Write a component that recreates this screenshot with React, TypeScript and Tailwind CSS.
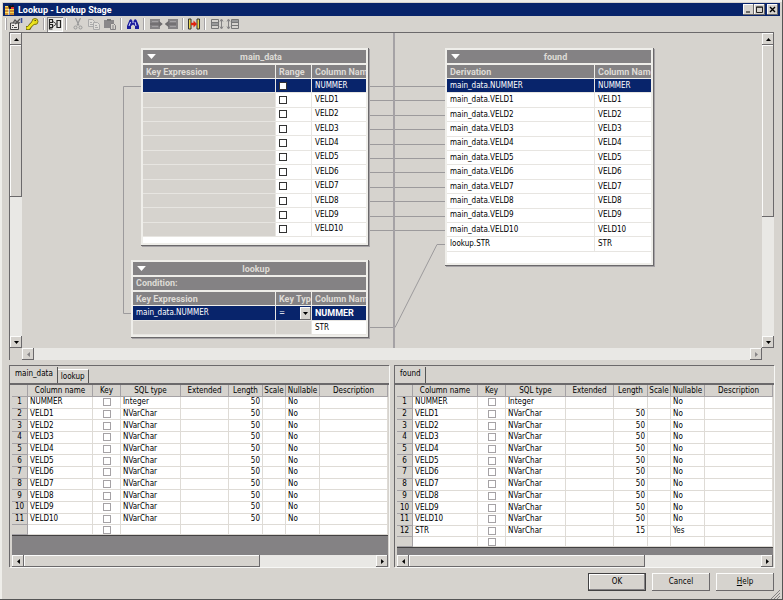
import type { ReactNode } from "react";
import clsx from "clsx";

type Column = { name: string; type: string; length?: number; nullable: string };

const velds = Array.from({ length: 10 }, (_, i) => `VELD${i + 1}`);

const mainColumns: Column[] = [
  { name: "NUMMER", type: "Integer", length: 50, nullable: "No" },
  ...velds.map((name) => ({ name, type: "NVarChar", length: 50, nullable: "No" })),
];

const foundColumns: Column[] = [
  { name: "NUMMER", type: "Integer", nullable: "No" },
  ...velds.map((name) => ({ name, type: "NVarChar", length: 50, nullable: "No" })),
  { name: "STR", type: "NVarChar", length: 15, nullable: "Yes" },
];

const raised =
  "bg-[#d6d3ce] shadow-[inset_-1px_-1px_#6b696b,inset_1px_1px_#fbfbfa]";

const arrows = {
  up: "M0 4h7L3.5 0z",
  down: "M0 0h7L3.5 4z",
  left: "M4 0v7L0 3.5z",
  right: "M0 0v7L4 3.5z",
};

function Arrow({ dir, className }: { dir: keyof typeof arrows; className?: string }) {
  const flat = dir === "up" || dir === "down";
  return (
    <svg
      aria-hidden="true"
      viewBox={flat ? "0 0 7 4" : "0 0 4 7"}
      className={className ?? (flat ? "h-[3px] w-[5px]" : "h-[5px] w-[3px]")}
      fill="currentColor"
    >
      <path d={arrows[dir]} />
    </svg>
  );
}

function ScrollButton({ dir, disabled }: { dir: keyof typeof arrows; disabled?: boolean }) {
  return (
    <button
      type="button"
      aria-label={`Scroll ${dir}`}
      disabled={disabled}
      className={clsx(
        "flex size-3 shrink-0 items-center justify-center",
        raised,
        disabled ? "text-[#848284]" : "text-black",
      )}
    >
      <Arrow dir={dir} />
    </button>
  );
}

function VerticalScroll({ thumb }: { thumb: string }) {
  return (
    <div className="flex w-3 shrink-0 flex-col bg-[#d6d3ce] pb-3">
      <div className="flex flex-1 flex-col bg-[#e9e8e5]">
        <ScrollButton dir="up" />
        <div className="flex-1">
          <div className={clsx(raised, thumb)} />
        </div>
        <ScrollButton dir="down" />
      </div>
    </div>
  );
}

function HorizontalScroll({ thumb, disabled }: { thumb?: string; disabled?: boolean }) {
  return (
    <div className="flex h-3 shrink-0 bg-[#e9e8e5]">
      <ScrollButton dir="left" disabled={disabled} />
      <div className="flex-1">{thumb && <div className={clsx("h-full", raised, thumb)} />}</div>
      <ScrollButton dir="right" disabled={disabled} />
    </div>
  );
}

function AppIcon() {
  return (
    <svg viewBox="0 0 12 12" className="size-3" aria-hidden="true">
      <path d="M1 2h4v9H1z" fill="#ffe35a" />
      <path d="M6 5h4v6H6z" fill="#f7d84a" />
      <path d="M1 4h4M1 7h4M1 10h4M6 7h4M6 10h4" stroke="#a23a10" />
      <path d="M5 1l3 1 1-2 1 3-3 2-3-2z" fill="#111" />
      <path d="M7 3h3v2H7z" fill="#d33" />
      <path d="M5 5v6" stroke="#fff" />
    </svg>
  );
}

function TitleBar() {
  const button = clsx("flex h-[11px] w-[11px] items-center justify-center text-black", raised);
  return (
    <header className="flex h-[13px] items-center gap-[2px] bg-[#08246b] pr-[2px] pl-px text-white">
      <AppIcon />
      <h1 className="flex-1 text-[9px] leading-3 font-bold">Lookup - Lookup Stage</h1>
      <div className="flex">
        <button type="button" aria-label="Minimize" className={button}>
          <svg viewBox="0 0 7 7" className="size-[7px]">
            <path d="M1 6h4" stroke="#000" />
          </svg>
        </button>
        <button type="button" aria-label="Maximize" className={button}>
          <svg viewBox="0 0 7 7" className="size-[7px]">
            <path d="M.5 1h6v5.5h-6zM0 1.2h7" fill="none" stroke="#222" />
          </svg>
        </button>
      </div>
      <button type="button" aria-label="Close" className={button}>
        <svg viewBox="0 0 7 7" className="size-[7px]">
          <path d="M1 1l5 5M6 1L1 6" stroke="#000" strokeWidth="1.4" />
        </svg>
      </button>
    </header>
  );
}

function Tool({ label, active, children }: { label: string; active?: boolean; children: ReactNode }) {
  return (
    <button
      type="button"
      aria-label={label}
      aria-pressed={active}
      className={clsx(
        "flex h-[15px] w-4 shrink-0 items-center justify-center",
        active && "bg-[#e9e8e5] shadow-[inset_1px_1px_#848284,inset_-1px_-1px_#fff]",
      )}
    >
      <svg viewBox="0 0 14 12" className="h-3 w-[14px]" fill="none">
        {children}
      </svg>
    </button>
  );
}

function Divider() {
  return <div className="mx-[2px] h-3 w-[2px] shrink-0 border-r border-l border-r-white border-l-[#a5a2a5]" />;
}

function Toolbar() {
  return (
    <div role="toolbar" className="flex h-4 items-center pl-[2px]">
      <div className="mr-px h-3 w-[2px] border-r border-l border-r-[#a5a2a5] border-l-white" />
      <Tool label="Stage properties">
        <path d="M1.500 5h8v6.500h-8z" fill="#eceae6" stroke="#444" />
        <path d="M3 9.500h1m1 0h3M3 7.500h2" stroke="#444" />
        <path d="M4 5l2-3 2 2 3-3M6 6l3-2 2 1" stroke="#555" strokeWidth="1.300" />
        <path d="M12.500 0v5" stroke="#3a4f9c" strokeWidth="1.600" />
      </Tool>
      <Tool label="Constraints">
        <path d="M1 10h3l1.500-2.500 4-4" stroke="#68600a" strokeWidth="4" />
        <circle cx="10" cy="3.500" r="3" fill="#e3da18" stroke="#817812" />
        <path d="M1.500 10h2l2-2.500L9 4" stroke="#efe61e" strokeWidth="2.600" />
        <path d="M9.500 2.500h1.500" stroke="#5d5508" />
      </Tool>
      <div className="w-px" />
      <Divider />
      <Tool label="Show links" active>
        <path d="M1.500 1v10M1.500 1.500h3v3h-3M1.500 6.500h3v3h-3M1 11h3.500M9 2.500h3.500v7H9z" stroke="#222" strokeWidth="1.200" />
        <path d="M5 3.500L8.500 6M5 8.500L8.500 6" stroke="#444" />
      </Tool>
      <Divider />
      <div className="w-px" />
      <Tool label="Cut">
        <path d="M4.500 0l3.500 7.500M9.500 0L6 7.500" stroke="#999" strokeWidth="1.200" />
        <circle cx="4.500" cy="9.500" r="1.500" stroke="#999" />
        <circle cx="9.500" cy="9.500" r="1.500" stroke="#999" />
      </Tool>
      <Tool label="Copy">
        <path d="M1.500 1.500h4l2 2v5h-6z" stroke="#aaa" fill="#dedcd8" />
        <path d="M6.500 4.500h4l2 2v5h-6zM8 7.500h2m-2 2h3M3 4.500h2m-2 2h3" stroke="#aaa" fill="#dedcd8" />
      </Tool>
      <Tool label="Paste">
        <path d="M1 2h10v8H1z" fill="#8a888a" />
        <path d="M4 1h4v2H4z" fill="#777" />
        <path d="M7.500 5.500h3l2 2v4h-5zM9 8h2m-2 2h2" fill="#d6d3ce" stroke="#848284" />
      </Tool>
      <Divider />
      <div className="w-px" />
      <Tool label="Find">
        <path d="M3.500 2L5 1l1.500 2h1L9 1l1.500 1 2.500 6v3H9V8L7 6.500 5 8v3H1V8z" fill="#1c1c9c" />
        <path d="M3 8l1.500-4M10 8L9 4M7 3v2" stroke="#d8dcff" />
      </Tool>
      <Divider />
      <div className="w-px" />
      <Tool label="Load columns">
        <path d="M1 1h10v10H1z" fill="#848284" />
        <path d="M3 3.500h7M3 8.500h7" stroke="#a5a2a5" />
        <path d="M1 6h12M9.500 3.500L12.500 6 9.500 8.500" stroke="#6d6b6d" strokeWidth="1.600" />
      </Tool>
      <Tool label="Save columns">
        <path d="M3 1h10v10H3z" fill="#848284" />
        <path d="M5 3.500h6M5 8.500h6" stroke="#a5a2a5" />
        <path d="M1 6h10M4 3.500L1 6l3 2.500" stroke="#6d6b6d" strokeWidth="1.600" />
      </Tool>
      <Divider />
      <Tool label="Auto match">
        <path d="M1.500 1v10H4V1zM10 1v10h2.500V1z" fill="#e8d44a" stroke="#333" />
        <path d="M4 6h3" stroke="#e02410" strokeWidth="2.500" />
        <path d="M6.500 2.500L10 6 6.500 9.500z" fill="#e02410" />
      </Tool>
      <Divider />
      <div className="w-px" />
      <Tool label="Expand rows">
        <path d="M1.500 1.500h7v9h-7zM2 4.500h6M2 7.500h6" stroke="#777" />
        <path d="M2 5h6v2H2z" fill="#999" />
        <path d="M11.500 2v8M10 3.500L11.500 1 13 3.500M10 8.500l1.500 2.500L13 8.500" stroke="#848284" />
      </Tool>
      <Tool label="Collapse rows">
        <path d="M5.500 1.500h7v9h-7zM6 4.500h6M6 7.500h6" stroke="#777" />
        <path d="M6 2h6v2H6z" fill="#999" />
        <path d="M2.500 2v8M1 3.500L2.500 1 4 3.500M1 8.500L2.500 11 4 8.500" stroke="#848284" />
      </Tool>
    </div>
  );
}

function LinkCard({ title, className, children }: { title: string; className: string; children: ReactNode }) {
  return (
    <section
      className={clsx(
        "absolute border-r border-b border-[#6b696b] bg-[#efeeea] p-[2px] shadow-[1px_1px_#a5a2a5]",
        className,
      )}
    >
      <h2 className="flex h-[13px] items-center bg-[#848284] pl-1 text-[9px] leading-3 font-bold text-[#dedbd6]">
        <Arrow dir="down" className="h-[5px] w-[9px] text-white" />
        <span className="flex-1 text-center">{title}</span>
      </h2>
      {children}
    </section>
  );
}

const small = "font-['DejaVu_Sans_Condensed',Roboto,sans-serif] text-[8px]";
const headCell =
  "h-[14px] overflow-hidden border-b border-[#efeeea] bg-[#848284] p-0 pl-[3px] text-left font-[Roboto,sans-serif] text-[9px] font-bold whitespace-nowrap text-[#dedbd6] not-last:border-r";
const bodyCell =
  "overflow-hidden border-b border-[#e7e5e1] p-0 pl-[3px] whitespace-nowrap not-last:border-r";
const cardTable = clsx("mt-[2px] w-full table-fixed border-separate border-spacing-0 leading-3", small);

function MainCard() {
  return (
    <LinkCard title="main_data" className="top-[15px] right-6 w-[228px]">
      <div className="bg-white pb-[6px]">
        <table className={clsx(cardTable, "h-[172px]")}>
          <thead>
            <tr>
              <th className={headCell}>Key Expression</th>
              <th className={clsx(headCell, "w-9")}>Range</th>
              <th className={clsx(headCell, "w-[54px]")}>Column Name</th>
            </tr>
          </thead>
          <tbody>
            {mainColumns.map(({ name }, i) => (
              <tr key={name} className={i === 0 ? "bg-[#08246b] text-white" : "bg-white"}>
                <td className={clsx(bodyCell, i > 0 && "bg-[#d6d3ce]")} />
                <td className={bodyCell}>
                  <input
                    type="checkbox"
                    aria-label={`Range ${name}`}
                    className="block size-2 appearance-none border border-[#333] bg-white"
                  />
                </td>
                <td className={bodyCell}>{name}</td>
              </tr>
            ))}
          </tbody>
        </table>
      </div>
    </LinkCard>
  );
}

function LookupCard() {
  return (
    <LinkCard title="lookup" className="top-[227px] right-6 w-[238px]">
      <p className="mt-[2px] h-[13px] bg-[#848284] pl-[3px] text-[9px] leading-[13px] font-bold text-[#dedbd6]">
        Condition:
      </p>
      <table className={clsx(cardTable, "h-[43px]")}>
        <thead>
          <tr>
            <th className={headCell}>Key Expression</th>
            <th className={clsx(headCell, "w-9")}>Key Type</th>
            <th className={clsx(headCell, "w-[54px]")}>Column Name</th>
          </tr>
        </thead>
        <tbody>
          <tr className="bg-[#08246b] text-white">
            <td className={bodyCell}>main_data.NUMMER</td>
            <td className={bodyCell}>
              <label className="flex items-center">
                <select aria-label="Key type" className="h-[13px] min-w-0 flex-1 appearance-none leading-3">
                  <option>=</option>
                </select>
                <span className={clsx("flex h-[13px] w-[11px] items-center justify-center text-black", raised)}>
                  <Arrow dir="down" />
                </span>
              </label>
            </td>
            <td className={clsx(bodyCell, "font-[Roboto,sans-serif] text-[9px] font-bold")}>NUMMER</td>
          </tr>
          <tr className="bg-[#d6d3ce]">
            <td className={bodyCell} />
            <td className={bodyCell} />
            <td className={clsx(bodyCell, "bg-white")}>STR</td>
          </tr>
        </tbody>
      </table>
    </LinkCard>
  );
}

function FoundCard() {
  return (
    <LinkCard title="found" className="top-[15px] left-[50px] w-[209px]">
      <div className="bg-white pb-[11px]">
        <table className={clsx(cardTable, "h-[187px]")}>
          <thead>
            <tr>
              <th className={headCell}>Derivation</th>
              <th className={clsx(headCell, "w-[56px]")}>Column Name</th>
            </tr>
          </thead>
          <tbody>
            {foundColumns.map(({ name }, i) => (
              <tr key={name} className={i === 0 ? "bg-[#08246b] text-white" : ""}>
                <td className={bodyCell}>{name === "STR" ? "lookup.STR" : `main_data.${name}`}</td>
                <td className={bodyCell}>{name}</td>
              </tr>
            ))}
          </tbody>
        </table>
      </div>
    </LinkCard>
  );
}

// y of the link that leaves the n-th column row
const linkY = (n: number) => Math.round(53 + n * 14.4) + 0.5;

function Canvas() {
  return (
    <main className="flex min-h-[328px] flex-1 border-t border-l border-[#6b696b]">
      <VerticalScroll thumb="h-[152px]" />
      <div className="flex min-w-0 flex-1 flex-col">
        <div className="grid flex-1 grid-cols-[371fr_2px_367fr]">
          <div className="relative overflow-hidden">
            <svg className="absolute top-0 right-0" width="371" height="315" fill="none" stroke="#9c9a9c">
              <path d="M119 53.500H101.500V280.500H109" />
              <path d="M347 294.500h24" />
              {mainColumns.map((c, i) => (
                <path key={c.name} d={`M347 ${linkY(i)}h24`} />
              ))}
            </svg>
            <MainCard />
            <LookupCard />
          </div>
          <div className="bg-[#a5a2a5]" />
          <div className="relative overflow-hidden">
            <svg className="absolute top-0 left-0" width="50" height="315" fill="none" stroke="#9c9a9c">
              {mainColumns.map((c, i) => (
                <path key={c.name} d={`M0 ${linkY(i)}h50`} />
              ))}
              <path d="M0 294.500L42 211.500h8" />
            </svg>
            <FoundCard />
          </div>
        </div>
        <HorizontalScroll disabled />
      </div>
      <VerticalScroll thumb="h-[172px]" />
    </main>
  );
}

const gridHeads = [
  { label: "", width: "w-4" },
  { label: "Column name", width: "w-[65px]" },
  { label: "Key", width: "w-7" },
  { label: "SQL type", width: "w-[60px]" },
  { label: "Extended", width: "w-12" },
  { label: "Length", width: "w-[34px]" },
  { label: "Scale", width: "w-[23px]" },
  { label: "Nullable", width: "w-[34px]" },
  { label: "Description", width: "" },
];

function ColumnGrid({ columns, height }: { columns: Column[]; height: string }) {
  const cell =
    "overflow-hidden border-r border-b border-[#dedbd6] p-0 px-[2px] whitespace-nowrap";
  return (
    <table
      className={clsx(
        "w-full table-fixed border-separate border-spacing-0 bg-white leading-[10px]",
        small,
        height,
      )}
    >
      <thead>
        <tr>
          {gridHeads.map(({ label, width }) => (
            <th
              key={label}
              className={clsx(
                "h-3 border-r border-b border-[#a5a2a5] bg-[#d6d3ce] p-0 font-normal whitespace-nowrap",
                width,
              )}
            >
              {label}
            </th>
          ))}
        </tr>
      </thead>
      <tbody>
        {[...columns, null].map((column, i) => (
          <tr key={i}>
            <th className="border-r border-b border-[#a5a2a5] bg-[#d6d3ce] p-0 font-normal">
              {column && i + 1}
            </th>
            <td className={cell}>{column?.name}</td>
            <td className={cell}>
              <input
                type="checkbox"
                aria-label={`Key ${column?.name ?? "new column"}`}
                className="mx-auto block size-2 appearance-none border border-[#a5a2a5] bg-white"
              />
            </td>
            <td className={cell}>{column?.type}</td>
            <td className={cell} />
            <td className={clsx(cell, "text-right")}>{column?.length}</td>
            <td className={cell} />
            <td className={cell}>{column?.nullable}</td>
            <td className={cell} />
          </tr>
        ))}
      </tbody>
    </table>
  );
}

function GridPanel({ tabs, columns, height }: { tabs: string[]; columns: Column[]; height: string }) {
  return (
    <section className="flex min-w-0 flex-1 flex-col border-t border-l border-[#6b696b] shadow-[1px_1px_#f7f7f5]">
      <div role="tablist" className={clsx("flex h-[17px] items-end leading-3", small)}>
        {tabs.map((tab, i) => (
          <button
            key={tab}
            type="button"
            role="tab"
            aria-selected={i === 0}
            className={clsx(
              "border-r border-[#555]",
              i === 0 ? "h-4 pr-1 pb-[2px] pl-[5px]" : "h-[14px] border-t border-t-white px-[3px]",
            )}
          >
            {tab}
          </button>
        ))}
      </div>
      <div className="flex flex-1 flex-col border-t-2 border-t-[#6b696b] pr-px pl-[2px]">
        <ColumnGrid columns={columns} height={height} />
        <div className="flex-1 border-t border-[#424142] bg-[#848284]" />
        <HorizontalScroll thumb="w-[67%]" />
      </div>
    </section>
  );
}

function DialogButton({ primary, children }: { primary?: boolean; children: ReactNode }) {
  return (
    <button
      type="button"
      className={clsx(
        "h-[18px] w-[58px] leading-3",
        small,
        primary
          ? "border border-[#424142] bg-[#d6d3ce] shadow-[inset_-1px_-1px_#848284,inset_1px_1px_#fff]"
          : raised,
      )}
    >
      {children}
    </button>
  );
}

export default function App() {
  return (
    <div className="flex min-h-screen flex-col border-r border-b border-[#555] bg-[#d6d3ce] pt-[3px] pr-[2px] pl-[3px] font-[Roboto,sans-serif] text-black shadow-[inset_2px_2px_#efeeea]">
      <TitleBar />
      <Toolbar />
      <div className="flex flex-1 flex-col gap-[5px] px-[6px]">
        <Canvas />
        <div className="flex h-[202px] gap-[5px]">
          <GridPanel tabs={["main_data", "lookup"]} columns={mainColumns} height="h-[150px]" />
          <GridPanel tabs={["found"]} columns={foundColumns} height="h-[162px]" />
        </div>
      </div>
      <footer className="relative flex justify-end gap-[6px] px-[6px] pt-[6px] pb-2">
        <DialogButton primary>OK</DialogButton>
        <DialogButton>Cancel</DialogButton>
        <DialogButton>
          <u>H</u>elp
        </DialogButton>
        <svg viewBox="0 0 9 9" className="absolute right-0 bottom-0 size-[9px]" stroke="#848284" aria-hidden="true">
          <path d="M0 9L9 0M3 9L9 3M6 9L9 6" />
        </svg>
      </footer>
    </div>
  );
}
